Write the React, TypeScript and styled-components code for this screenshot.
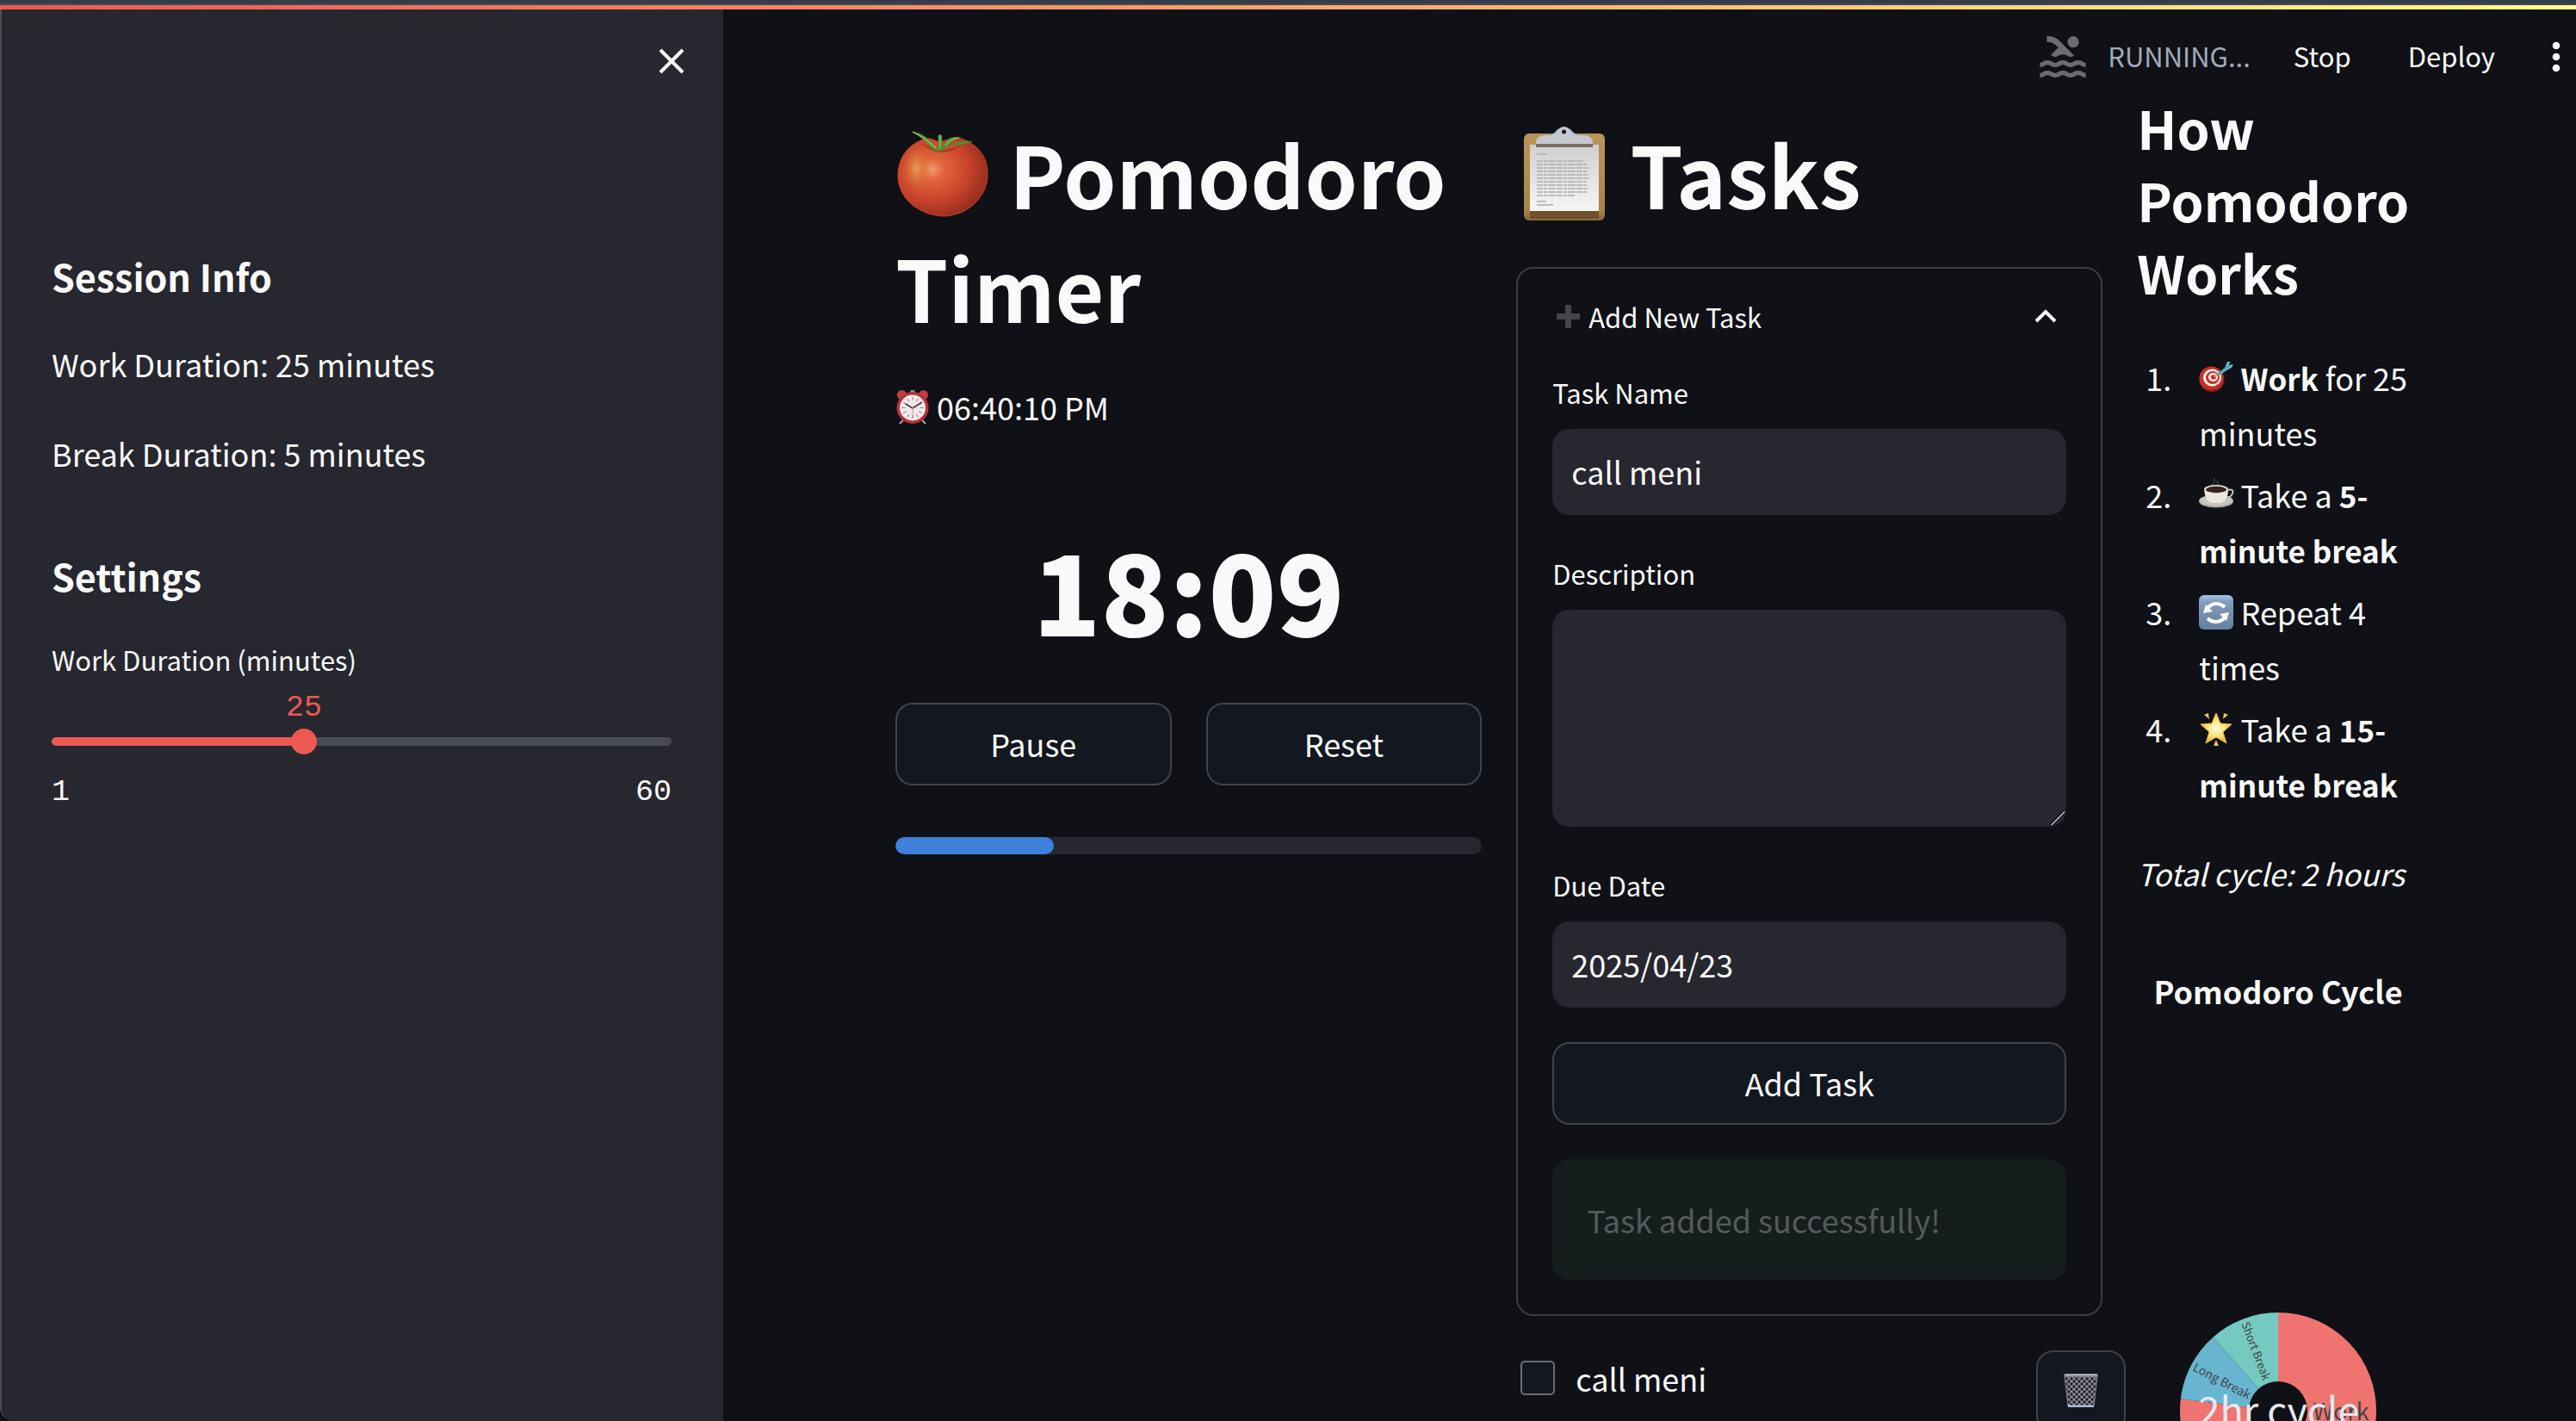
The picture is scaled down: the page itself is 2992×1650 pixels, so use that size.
import React, { useState } from "react";
import styled, { createGlobalStyle, css } from "styled-components";
import { MdPool } from "react-icons/md";

const sans = `"Noto Sans CJK SC", "Noto Sans", sans-serif`;
const mono = `"Liberation Mono", monospace`;
const color = {
  bg: "#0f1116",
  panel: "#26272f",
  text: "#fafafa",
  button: "#131720",
  line: "#41434a",
  red: "#ec5953",
};

const GlobalStyle = createGlobalStyle`
  * { box-sizing: border-box; }
  body { margin: 0; background: ${color.bg}; color: ${color.text}; font: 36px/64px ${sans}; }
  h1, h2, h3, p, ol { margin: 0; padding: 0; }
  button, input, textarea { font: inherit; color: inherit; margin: 0; }
`;

const Shell = styled.div`
  display: flex;
  flex-direction: column;
  height: 100vh;
  overflow: hidden;
`;
const WindowEdge = styled.div`
  flex: none;
  height: 6px;
  background: #343c4c;
  border-bottom: 2px solid #46474d;
`;
const RunningStripe = styled.div`
  flex: none;
  height: 5px;
  background: linear-gradient(90deg, ${color.red}, #f9a36a 50%, #fffd8c);
`;
const Body = styled.div`
  flex: 1;
  min-height: 0;
  display: flex;
  border-left: 2px solid #4b4c52;
  border-bottom-left-radius: 16px;
  overflow: hidden;
`;

const Sidebar = styled.aside`
  flex: none;
  width: 838px;
  padding: 38px 60px 0 58px;
  background: ${color.panel};
  display: flex;
  flex-direction: column;
`;
const CloseRow = styled.div`
  display: flex;
  justify-content: flex-end;
  margin: 0 -15px 197px 0;
`;
const IconButton = styled.button`
  display: flex;
  align-items: center;
  justify-content: center;
  padding: 0;
  border: 0;
  background: none;
  cursor: pointer;
`;
const SideHeading = styled.h3`
  font-size: 43px;
  line-height: 60px;
  font-weight: 600;
`;
const SideGroup = styled.section`
  display: flex;
  flex-direction: column;
  gap: 40px;
  margin-bottom: 80px;
`;
const Label = styled.label`
  display: block;
  font-size: 31px;
  line-height: 56px;
`;
const Slider = styled.div`
  display: flex;
  flex-direction: column;
  font: 35px/40px ${mono};
`;
const SliderValue = styled.output`
  width: 42px;
  margin: 8px 0 14px -21px;
  color: ${color.red};
`;
const SliderTrack = styled.div`
  display: flex;
  align-items: center;
  height: 10px;
  border-radius: 5px;
`;
const Range = styled.input`
  flex: 1;
  appearance: none;
  height: 30px;
  margin: 0 -15px;
  background: transparent;
  &::-webkit-slider-thumb {
    appearance: none;
    width: 30px;
    height: 30px;
    border-radius: 50%;
    background: ${color.red};
  }
`;
const SliderEnds = styled.div`
  display: flex;
  justify-content: space-between;
  margin-top: 34px;
`;

const Main = styled.main`
  flex: 1;
  min-width: 0;
`;
const Toolbar = styled.header`
  display: flex;
  align-items: center;
  justify-content: flex-end;
  height: 64px;
  margin-top: 23px;
  padding-right: 18px;
  font-size: 31px;
  line-height: 56px;
`;
const Status = styled.span`
  color: #a3a8b8;
  padding-bottom: 2px;
  margin: 0 50px 0 20px;
`;
const SwimIcon = styled(MdPool)`
  color: #6b6c6f;
`;
const TextButton = styled.button`
  padding: 0 0 2px;
  border: 0;
  background: none;
  margin-right: 66px;
`;
const Columns = styled.div`
  display: grid;
  grid-template-columns: minmax(0, 22fr) minmax(0, 22fr) minmax(0, 10fr);
  gap: 40px;
  padding: 0 200px;
  align-items: start;
`;
const Column = styled.section<{ $top: number }>`
  display: flex;
  flex-direction: column;
  padding-top: ${(p) => p.$top}px;
`;
const Title = styled.h1`
  font-size: 98px;
  line-height: 132px;
  font-weight: 700;
`;
const Emoji = styled.svg<{ $size: number }>`
  width: ${(p) => p.$size}px;
  height: ${(p) => p.$size}px;
  vertical-align: -0.14em;
  overflow: visible;
`;
const Clock = styled.p`
  margin-top: 42px;
`;
const Countdown = styled.div`
  margin: 100px 0 56px;
  font-size: 130px;
  line-height: 156px;
  font-weight: 900;
  text-align: center;
`;
const ButtonPair = styled.div`
  display: grid;
  grid-template-columns: 1fr 1fr;
  gap: 40px;
`;
const Button = styled.button<{ $width?: string }>`
  width: ${(p) => p.$width ?? "auto"};
  height: 96px;
  padding: 0 0 2px;
  display: flex;
  align-items: center;
  justify-content: center;
  border: 2px solid ${color.line};
  border-radius: 20px;
  background: ${color.button};
`;
const Progress = styled.div`
  height: 20px;
  margin-top: 60px;
  border-radius: 10px;
  background: ${color.panel};
  overflow: hidden;
`;
const ProgressFill = styled.div`
  height: 100%;
  border-radius: 10px;
  background: #3f80da;
`;

const Expander = styled.div`
  margin: 44px 0 40px;
  padding: 28px 40px 40px;
  border: 2px solid #3b3d42;
  border-radius: 20px;
`;
const Summary = styled.button`
  display: flex;
  align-items: center;
  justify-content: space-between;
  width: 100%;
  padding: 0 8px 0 0;
  margin-bottom: 32px;
  border: 0;
  background: none;
  font-size: 31px;
  line-height: 56px;
`;
const SummaryText = styled.span`
  display: flex;
  align-items: center;
  gap: 8px;
`;
const Form = styled.form`
  display: flex;
  flex-direction: column;
  gap: 40px;
`;
const Field = styled.div`
  display: flex;
  flex-direction: column;
  gap: 14px;
`;
const box = css`
  width: 100%;
  border: 0;
  border-radius: 20px;
  background: ${color.panel};
  padding: 0 22px 2px;
  outline: none;
`;
const TextInput = styled.input`
  ${box}
  height: 100px;
`;
const TextArea = styled.textarea`
  ${box}
  display: block;
  height: 252px;
  resize: none;
  background: linear-gradient(135deg, transparent 45%, #0f1116 46%, #0f1116 50%, #b9babd 51%, #b9babd 57%, transparent 58%)
    right 2px bottom 2px / 17px 17px no-repeat ${color.panel};
`;
const Notice = styled.div`
  padding: 38px 40px;
  border-radius: 20px;
  background: #161e1d;
  color: #535b59;
`;
const TaskRow = styled.div`
  display: grid;
  grid-template-columns: minmax(0, 88fr) minmax(0, 12fr);
  gap: 40px;
  align-items: start;
`;
const CheckLabel = styled.label`
  display: flex;
  align-items: center;
  gap: 24px;
  padding-left: 5px;
`;
const CheckBox = styled.input`
  appearance: none;
  width: 40px;
  height: 40px;
  border: 2px solid #6c6c72;
  border-radius: 5px;
  background: ${color.button};
  &:checked { background: ${color.red}; }
`;

const HowTitle = styled.h3`
  font-size: 61px;
  line-height: 84px;
  font-weight: 600;
`;
const Steps = styled.ol`
  display: flex;
  flex-direction: column;
  gap: 8px;
  margin: 48px 0 40px;
  list-style: none;
  counter-reset: step;
`;
const Step = styled.li`
  display: flex;
  gap: 32px;
  white-space: nowrap;
  counter-increment: step;
  &::before {
    content: counter(step) ".";
    flex: none;
    width: 40px;
    text-align: right;
  }
  b { font-size: 35px; line-height: 1; }
`;
const Total = styled.em`
  display: block;
  font-size: 35px;
  white-space: nowrap;
`;
const Chart = styled.svg`
  display: block;
  width: 310px;
  height: 720px;
  margin-top: 40px;
  overflow: visible;
  font-family: ${sans};
`;

const Tomato = () => (
  <Emoji $size={110} viewBox="0 0 110 110" role="img" aria-label="tomato">
    <defs>
      <radialGradient id="tomato" cx="0.38" cy="0.4" r="0.68">
        <stop offset="0" stopColor="#f09a72" />
        <stop offset="0.2" stopColor="#e2653c" />
        <stop offset="0.6" stopColor="#c8432a" />
        <stop offset="1" stopColor="#8a2a1c" />
      </radialGradient>
      <radialGradient id="tomatoGlow" cx="0.5" cy="0.5" r="0.5">
        <stop offset="0" stopColor="#e8a35c" stopOpacity="0.9" />
        <stop offset="1" stopColor="#c8622c" stopOpacity="0" />
      </radialGradient>
    </defs>
    <path d="M32 15C42 11 46 18 53 18C60 15 72 11 82 16C99 24 107 38 107 55C107 82 84 103 56 104C28 103 3 84 3 57C3 38 13 22 32 15Z" fill="url(#tomato)" stroke="#cf4420" strokeWidth="1" />
    <ellipse cx="24" cy="48" rx="17" ry="28" fill="url(#tomatoGlow)" />
    <path d="M30 19Q42 25 50 27Q65 27 78 21Q64 31 50 30Q39 28 30 19Z" fill="#8f2a1a" opacity="0.6" />
    <path d="M19 6Q29 6 40 16Q46 22 49 26L50 27Q50 15 49 11Q52 7 54 11L55 25Q57 14 68 12Q73 12 77 13Q66 14 60 24Q72 15 90 17Q80 22 72 21Q62 22 54 28Q47 30 42 25Q32 12 19 6Z" fill="#4d9130" />
    <path d="M20 6Q36 14 47 25M52 10V25M58 22Q64 14 74 13" stroke="#86bd55" strokeWidth="1.5" fill="none" />
  </Emoji>
);

const Clipboard = () => (
  <Emoji $size={110} viewBox="0 0 110 110" role="img" aria-label="clipboard">
    <defs>
      <linearGradient id="board" x1="0" y1="0" x2="0" y2="1">
        <stop offset="0" stopColor="#bb945a" />
        <stop offset="0.88" stopColor="#a9834a" />
        <stop offset="1" stopColor="#8b683a" />
      </linearGradient>
      <linearGradient id="paper" x1="0" y1="0" x2="0" y2="1">
        <stop offset="0" stopColor="#cfcfcf" />
        <stop offset="1" stopColor="#f6f6f6" />
      </linearGradient>
    </defs>
    <rect x="9" y="8" width="94" height="101" rx="6" fill="url(#board)" />
    <rect x="16" y="98" width="80" height="9" fill="#6f502c" />
    <rect x="16" y="21" width="80" height="77" fill="url(#paper)" />
    <path d="M23 23V18Q24 10 34 10H42Q46 8 49 3Q56 -3 62 3Q65 8 69 10H78Q88 10 89 18V23Z" fill="#c6cace" />
    <path d="M41 10Q46 8 49 3M62 3Q65 8 71 10" stroke="#9fbfdc" strokeWidth="1.5" fill="none" />
    <path d="M23 20H89V24H23Z" fill="#7b6f6c" />
    <ellipse cx="55.500" cy="6" rx="2.500" ry="2.500" fill="#17181c" />
    <g stroke="#adadad" strokeWidth="1.500">
      <path d="M24 32H35M24 87H35M24 91H43" />
      {[79, 83, 85, 82, 84, 85, 83, 82, 84, 82, 68].map((x, i) => (
        <path key={i} d={`M24 ${40 + i * 4}H${x}`} strokeDasharray="7 1 4 1 9 1" />
      ))}
    </g>
  </Emoji>
);

const AlarmClock = () => (
  <Emoji $size={40} viewBox="0 0 40 40" role="img" aria-label="alarm clock">
    <path d="M9 35L5 39M31 35L35 39" stroke="#a9a9ad" strokeWidth="2" />
    <circle cx="7.500" cy="5.500" r="5.500" fill="#c23d46" />
    <circle cx="32.500" cy="5.500" r="5.500" fill="#c23d46" />
    <path d="M17.500 0H22.500V3H17.500Z" fill="#909095" />
    <circle cx="20" cy="20.500" r="18.500" fill="#b7323a" />
    <circle cx="20" cy="20.500" r="15" fill="#ececec" />
    {Array.from({ length: 12 }, (_, i) => (
      <path key={i} d="M20 8V12" stroke="#d56a6a" strokeWidth="1" transform={`rotate(${i * 30} 20 20.500)`} />
    ))}
    <path d="M12 16L20 21L31 14" stroke="#3a3a3c" strokeWidth="1.500" fill="none" />
    <path d="M20 18V33" stroke="#de8d8d" strokeWidth="1" />
  </Emoji>
);

const Target = () => (
  <Emoji $size={40} viewBox="0 0 40 40" role="img" aria-label="target">
    <ellipse cx="15" cy="22" rx="14.500" ry="14" fill="#8f1d1c" />
    <ellipse cx="14.500" cy="20" rx="14" ry="13.500" fill="#c92f2a" />
    <ellipse cx="15.500" cy="19.500" rx="10.500" ry="10" fill="#f3f3f3" />
    <ellipse cx="16" cy="19.500" rx="8" ry="7.500" fill="#c92f2a" />
    <ellipse cx="16.500" cy="19" rx="5.500" ry="5" fill="#f3f3f3" />
    <ellipse cx="17" cy="19" rx="3" ry="2.700" fill="#c92f2a" />
    <path d="M18 19L23 14" stroke="#d9a441" strokeWidth="2" />
    <path d="M21 15L30 8L33 1L36 1L35 5L40 4L38 8L32 11L24 17Z" fill="#5fbcc6" />
    <path d="M22 16L35 5" stroke="#2f7f8c" strokeWidth="1" />
  </Emoji>
);

const Coffee = () => (
  <Emoji $size={40} viewBox="0 0 40 40" role="img" aria-label="coffee">
    <path d="M17 9Q15 6 18 4Q20 2 17 0M21 9Q24 6 21 3" stroke="#55565a" strokeWidth="1" fill="none" />
    <ellipse cx="20" cy="27" rx="20" ry="7.500" fill="#aaa69d" />
    <ellipse cx="20" cy="26" rx="19.500" ry="6.500" fill="#c9c6bd" />
    <path d="M33 14Q41 12 39 18Q37 23 31 23" stroke="#c8c4ba" strokeWidth="2" fill="none" />
    <path d="M6 13Q7 27 15 29H25Q34 27 34 13Z" fill="#ebe8e0" />
    <ellipse cx="20" cy="13" rx="14" ry="5" fill="#d8d4ca" />
    <ellipse cx="20" cy="13.500" rx="12" ry="3.700" fill="#3a2118" />
  </Emoji>
);

const Repeat = () => (
  <Emoji $size={40} viewBox="0 0 40 40" role="img" aria-label="repeat">
    <defs>
      <linearGradient id="tile" x1="0" y1="0" x2="0" y2="1">
        <stop offset="0" stopColor="#aac4e0" />
        <stop offset="0.2" stopColor="#7f9dbf" />
        <stop offset="1" stopColor="#657f9b" />
      </linearGradient>
    </defs>
    <rect width="40" height="40" rx="6" fill="url(#tile)" />
    <path d="M9 17Q13 10 20 10Q26 10 30 14M31 24Q27 31 20 31Q14 31 10 27" stroke="#fff" strokeWidth="4" fill="none" />
    <path d="M5 21L8 11L16 19ZM35 20L32 30L24 22Z" fill="#fff" />
  </Emoji>
);

const Star = () => (
  <Emoji $size={40} viewBox="0 0 40 40" role="img" aria-label="glowing star">
    <defs>
      <radialGradient id="star" cx="0.5" cy="0.5" r="0.55">
        <stop offset="0" stopColor="#fffde0" />
        <stop offset="0.5" stopColor="#fbe374" />
        <stop offset="1" stopColor="#e8ae36" />
      </radialGradient>
    </defs>
    <path d="M20 1L25 13L38 14L28 23L32 36L20 29L8 36L12 23L2 14L15 13Z" fill="url(#star)" strokeLinejoin="round" stroke="#eab94a" strokeWidth="1" />
    <path d="M6 3L11 1L12 8ZM34 3L29 1L28 8ZM17 39L20 32L23 39Z" fill="#eec34f" />
  </Emoji>
);

const Basket = () => (
  <svg width="40" height="40" viewBox="0 0 40 40" aria-hidden="true">
    <defs>
      <pattern id="mesh" width="6" height="6" patternUnits="userSpaceOnUse">
        <path d="M0 0L6 6M6 0L0 6" stroke="#9a9ba1" strokeWidth="1.200" />
      </pattern>
    </defs>
    <path d="M1 3H39L35 38H5Z" fill="#202229" />
    <path d="M1 3H39L35 38H5Z" fill="url(#mesh)" stroke="#85868c" strokeWidth="1" />
    <rect x="0" y="0" width="40" height="4" rx="2" fill="#83868c" />
    <path d="M2 1.500H38" stroke="#b6cbdc" strokeWidth="1" />
    <path d="M5 36.500H35V39H5Z" fill="#aebfd0" />
  </svg>
);

const MIN = 1;
const MAX = 60;

const CX = 164;
const CY = 552;
const polar = (r: number, deg: number) => {
  const a = (deg * Math.PI) / 180;
  return `${CX + r * Math.sin(a)} ${CY - r * Math.cos(a)}`;
};
const slice = (from: number, to: number) => {
  const big = to - from > 180 ? 1 : 0;
  return `M${polar(114, from)}A114 114 0 ${big} 1 ${polar(114, to)}L${polar(34, to)}A34 34 0 ${big} 0 ${polar(34, from)}Z`;
};

export default function App() {
  const [minutes, setMinutes] = useState(25);
  const [name, setName] = useState("call meni");
  const [due, setDue] = useState("2025/04/23");
  const at = ((minutes - MIN) / (MAX - MIN)) * 100;

  return (
    <Shell>
      <GlobalStyle />
      <WindowEdge />
      <RunningStripe />
      <Body>
        <Sidebar>
          <CloseRow>
            <IconButton aria-label="Close sidebar">
              <svg width="30" height="44" viewBox="0 0 30 44">
                <path d="M2 9L28 35M28 9L2 35" stroke="#fafafa" strokeWidth="4" />
              </svg>
            </IconButton>
          </CloseRow>
          <SideGroup>
            <SideHeading>Session Info</SideHeading>
            <p>Work Duration: 25 minutes</p>
            <p>Break Duration: 5 minutes</p>
          </SideGroup>
          <SideGroup>
            <SideHeading>Settings</SideHeading>
            <div>
              <Label htmlFor="work">Work Duration (minutes)</Label>
              <Slider>
                <SliderValue htmlFor="work" style={{ transform: `translateX(${(at / 100) * 720}px)` }}>
                  {minutes}
                </SliderValue>
                <SliderTrack style={{ background: `linear-gradient(90deg, ${color.red} ${at}%, #484a54 ${at}%)` }}>
                  <Range id="work" type="range" min={MIN} max={MAX} value={minutes} onChange={(e) => setMinutes(Number(e.target.value))} />
                </SliderTrack>
                <SliderEnds>
                  <span>{MIN}</span>
                  <span>{MAX}</span>
                </SliderEnds>
              </Slider>
            </div>
          </SideGroup>
        </Sidebar>

        <Main>
          <Toolbar>
            <SwimIcon size={64} />
            <Status>RUNNING...</Status>
            <TextButton>Stop</TextButton>
            <TextButton>Deploy</TextButton>
            <IconButton aria-label="Menu">
              <svg width="10" height="40" viewBox="0 0 10 40" fill="#fafafa">
                <circle cx="5" cy="7" r="4.300" />
                <circle cx="5" cy="20" r="4.300" />
                <circle cx="5" cy="33" r="4.300" />
              </svg>
            </IconButton>
          </Toolbar>

          <Columns>
            <Column $top={36}>
              <Title>
                <Tomato /> Pomodoro Timer
              </Title>
              <Clock>
                <AlarmClock /> 06:40:10 PM
              </Clock>
              <Countdown>18:09</Countdown>
              <ButtonPair>
                <Button>Pause</Button>
                <Button>Reset</Button>
              </ButtonPair>
              <Progress role="progressbar" aria-valuenow={27}>
                <ProgressFill style={{ width: "27%" }} />
              </Progress>
            </Column>

            <Column $top={36}>
              <Title>
                <Clipboard /> Tasks
              </Title>
              <Expander>
                <Summary aria-expanded="true">
                  <SummaryText>
                    <svg width="34" height="34" viewBox="0 0 34 34" aria-hidden="true">
                      <path d="M15 3H22V13H32V20H22V30H15V20H5V13H15Z" fill="#454546" />
                    </svg>
                    Add New Task
                  </SummaryText>
                  <svg width="32" height="32" viewBox="0 0 32 32" aria-hidden="true">
                    <path d="M5 21L16 10L27 21" stroke="#fafafa" strokeWidth="4" fill="none" />
                  </svg>
                </Summary>
                <Form onSubmit={(e) => e.preventDefault()}>
                  <Field>
                    <Label htmlFor="name">Task Name</Label>
                    <TextInput id="name" value={name} onChange={(e) => setName(e.target.value)} />
                  </Field>
                  <Field>
                    <Label htmlFor="description">Description</Label>
                    <TextArea id="description" />
                  </Field>
                  <Field>
                    <Label htmlFor="due">Due Date</Label>
                    <TextInput id="due" value={due} onChange={(e) => setDue(e.target.value)} />
                  </Field>
                  <Button $width="100%">Add Task</Button>
                  <Notice role="status">Task added successfully!</Notice>
                </Form>
              </Expander>
              <TaskRow>
                <CheckLabel>
                  <CheckBox type="checkbox" />
                  call meni
                </CheckLabel>
                <Button $width="104px" aria-label="Delete task">
                  <Basket />
                </Button>
              </TaskRow>
            </Column>

            <Column $top={8}>
              <HowTitle>How Pomodoro Works</HowTitle>
              <Steps>
                <Step>
                  <span>
                    <Target /> <b>Work</b> for 25
                    <br />
                    minutes
                  </span>
                </Step>
                <Step>
                  <span>
                    <Coffee /> Take a <b>5-<br />minute break</b>
                  </span>
                </Step>
                <Step>
                  <span>
                    <Repeat /> Repeat 4<br />
                    times
                  </span>
                </Step>
                <Step>
                  <span>
                    <Star /> Take a <b>15-<br />minute break</b>
                  </span>
                </Step>
              </Steps>
              <Total>Total cycle: 2 hours</Total>
              <Chart viewBox="0 0 310 720" role="img" aria-label="Pomodoro Cycle">
                <text x={CX} y="80" textAnchor="middle" fontSize="36" fontWeight="700" fill="#fafafa">
                  Pomodoro Cycle
                </text>
                <path d={slice(0, 276.92)} fill="#ef746f" />
                <path d={slice(276.92, 318.46)} fill="#67b5d1" />
                <path d={slice(318.46, 360)} fill="#74cac1" />
                <g fill="#444" textAnchor="middle">
                  <text fontSize="13" transform={`translate(${polar(74, 336)}) rotate(69.2)`}>Short Break</text>
                  <text fontSize="14" transform={`translate(${polar(74, 294)}) rotate(27.7)`}>Long Break</text>
                  <text x="237" y="563" fontSize="27">Work</text>
                </g>
                <text x={CX + 1} y="569" textAnchor="middle" fontSize="45" fill="#e6e8f0">
                  2hr cycle
                </text>
              </Chart>
            </Column>
          </Columns>
        </Main>
      </Body>
    </Shell>
  );
}
